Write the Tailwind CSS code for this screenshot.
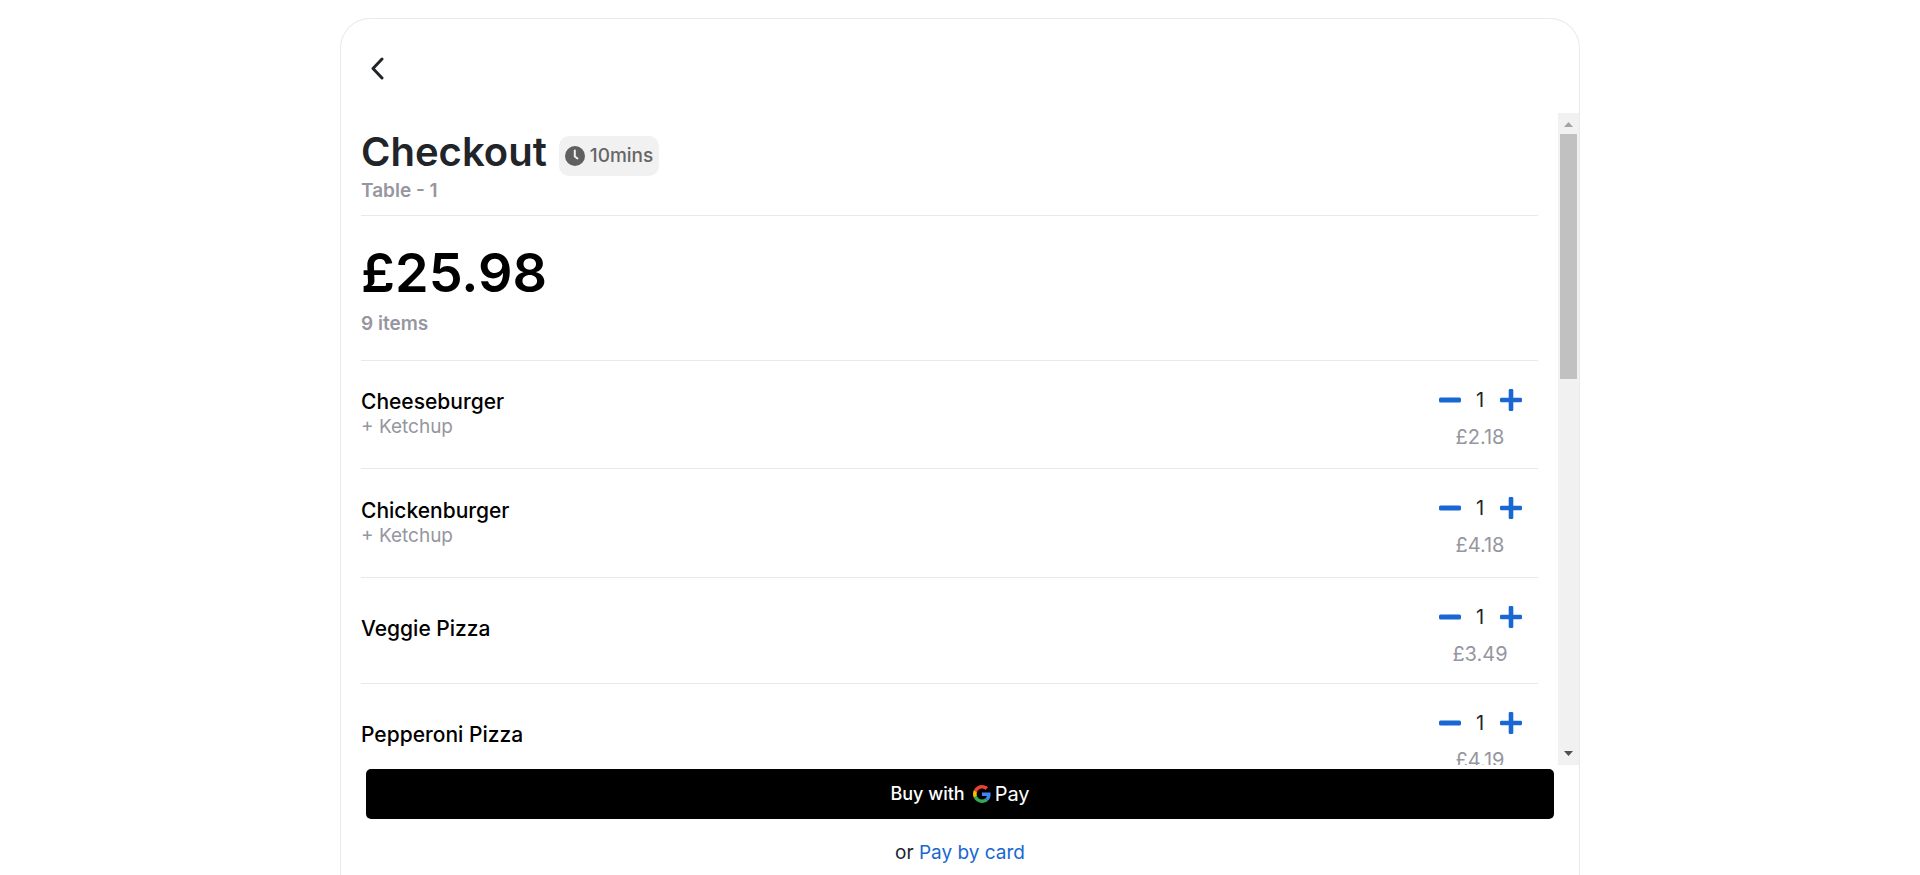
<!DOCTYPE html>
<html lang="en">
<head>
<meta charset="utf-8">
<meta name="viewport" content="width=device-width, initial-scale=1">
<title>Checkout</title>
<script src="https://cdn.jsdelivr.net/npm/@tailwindcss/browser@4"></script>
</head>
<body class="bg-white font-['Inter',sans-serif] text-[#212529]">
<svg class="hidden">
  <symbol id="minus" viewBox="0 0 22 22"><rect y="8.5" width="22" height="5" rx="1.5" fill="currentColor"/></symbol>
  <symbol id="plus" viewBox="0 0 22 22"><path fill="currentColor" d="M10 0h2a1.3 1.3 0 0 1 1.3 1.3v7.4h7.4A1.3 1.3 0 0 1 22 10v2a1.3 1.3 0 0 1-1.3 1.3h-7.4v7.4A1.3 1.3 0 0 1 12 22h-2a1.3 1.3 0 0 1-1.3-1.3v-7.4H1.3A1.3 1.3 0 0 1 0 12v-2a1.3 1.3 0 0 1 1.3-1.3h7.4V1.3A1.3 1.3 0 0 1 10 0z"/></symbol>
</svg>
<div class="flex h-screen flex-col overflow-hidden px-4 pt-[18px]">
  <main class="mx-auto flex min-h-0 w-full max-w-[1240px] grow flex-col rounded-t-[30px] border border-b-0 border-[#e9e9ea]">
    <header class="flex h-[94px] shrink-0 items-center px-5 pt-1">
      <button type="button" aria-label="Back" class="flex size-8 items-center justify-center">
        <svg class="h-6 w-4" viewBox="0 0 16 24" fill="none" stroke="currentColor" stroke-width="3" stroke-linecap="round" stroke-linejoin="round"><path d="M13 3 4 12.500 13 22"/></svg>
      </button>
    </header>
    <div class="flex min-h-0 grow">
      <div class="min-w-0 grow overflow-y-auto px-5 [scrollbar-width:none]">
        <section class="border-b border-[#e9e9ea] pt-[15px] pb-3">
          <div class="flex h-12 items-center gap-3">
            <h1 class="text-[40px] leading-12 font-semibold">Checkout</h1>
            <span class="mt-2 flex h-10 items-center gap-[5px] rounded-[10px] bg-[#f1f1f1] px-1.5 text-[19px] font-medium text-[#666]">
              <svg class="size-5" viewBox="0 0 20 20"><circle cx="10" cy="10" r="10" fill="#606060"/><path d="M9.800 4.500v6l2.700 2" fill="none" stroke="#f1f1f1" stroke-width="2" stroke-linecap="round" stroke-linejoin="round"/></svg>
              10mins
            </span>
          </div>
          <p class="mt-[3px] text-[19px] leading-6 font-semibold text-[#9696a0]">Table - 1</p>
        </section>
        <section class="border-b border-[#e9e9ea] pt-[21px] pb-6">
          <p class="text-[54px] leading-[72px] font-semibold text-black">£25.98</p>
          <p class="mt-[3px] text-[19px] leading-6 font-semibold text-[#9696a0]">9 items</p>
        </section>
        <ul>
          <li class="flex items-center justify-between border-b border-[#e9e9ea]">
            <div class="pt-7 pb-[29px]">
              <h2 class="text-[21px] leading-[26px] font-medium text-black">Cheeseburger</h2>
              <p class="text-[19px] leading-6 text-[#9696a0]">+ Ketchup</p>
            </div>
            <div class="flex w-[116px] flex-col items-center self-start pt-7 pb-4">
              <div class="flex items-center gap-3.5">
                <button type="button" aria-label="Remove one Cheeseburger" class="text-[#1967d2]"><svg class="size-[22px]"><use href="#minus"/></svg></button>
                <span class="w-[11px] text-center text-xl leading-[22px]">1</span>
                <button type="button" aria-label="Add one Cheeseburger" class="text-[#1967d2]"><svg class="size-[22px]"><use href="#plus"/></svg></button>
              </div>
              <p class="mt-3.5 text-xl leading-6 text-[#9696a0]">£2.18</p>
            </div>
          </li>
          <li class="flex items-center justify-between border-b border-[#e9e9ea]">
            <div class="pt-[29px] pb-[29px]">
              <h2 class="text-[21px] leading-[26px] font-medium text-black">Chickenburger</h2>
              <p class="text-[19px] leading-6 text-[#9696a0]">+ Ketchup</p>
            </div>
            <div class="flex w-[116px] flex-col items-center self-start pt-7 pb-4">
              <div class="flex items-center gap-3.5">
                <button type="button" aria-label="Remove one Chickenburger" class="text-[#1967d2]"><svg class="size-[22px]"><use href="#minus"/></svg></button>
                <span class="w-[11px] text-center text-xl leading-[22px]">1</span>
                <button type="button" aria-label="Add one Chickenburger" class="text-[#1967d2]"><svg class="size-[22px]"><use href="#plus"/></svg></button>
              </div>
              <p class="mt-3.5 text-xl leading-6 text-[#9696a0]">£4.18</p>
            </div>
          </li>
          <li class="flex items-center justify-between border-b border-[#e9e9ea]">
            <h2 class="pb-1 text-[21px] leading-[26px] font-medium text-black">Veggie Pizza</h2>
            <div class="flex w-[116px] flex-col items-center self-start pt-7 pb-[17px]">
              <div class="flex items-center gap-3.5">
                <button type="button" aria-label="Remove one Veggie Pizza" class="text-[#1967d2]"><svg class="size-[22px]"><use href="#minus"/></svg></button>
                <span class="w-[11px] text-center text-xl leading-[22px]">1</span>
                <button type="button" aria-label="Add one Veggie Pizza" class="text-[#1967d2]"><svg class="size-[22px]"><use href="#plus"/></svg></button>
              </div>
              <p class="mt-3.5 text-xl leading-6 text-[#9696a0]">£3.49</p>
            </div>
          </li>
          <li class="flex items-center justify-between border-b border-[#e9e9ea]">
            <h2 class="pb-1 text-[21px] leading-[26px] font-medium text-black">Pepperoni Pizza</h2>
            <div class="flex w-[116px] flex-col items-center self-start pt-7 pb-[17px]">
              <div class="flex items-center gap-3.5">
                <button type="button" aria-label="Remove one Pepperoni Pizza" class="text-[#1967d2]"><svg class="size-[22px]"><use href="#minus"/></svg></button>
                <span class="w-[11px] text-center text-xl leading-[22px]">1</span>
                <button type="button" aria-label="Add one Pepperoni Pizza" class="text-[#1967d2]"><svg class="size-[22px]"><use href="#plus"/></svg></button>
              </div>
              <p class="mt-3.5 text-xl leading-6 text-[#9696a0]">£4.19</p>
            </div>
          </li>
        </ul>
      </div>
      <div aria-hidden="true" class="flex w-[21px] shrink-0 flex-col items-center bg-[#f1f1f1]">
        <svg class="h-[21px] w-[21px] shrink-0" viewBox="0 0 21 21"><path d="M6 14 10.500 9 15 14z" fill="#a3a3a3"/></svg>
        <div class="h-[245px] w-[17px] bg-[#c1c1c1]"></div>
        <svg class="mt-auto h-[21px] w-[21px] shrink-0" viewBox="0 0 21 21"><path d="M6 7 10.500 12 15 7z" fill="#505050"/></svg>
      </div>
    </div>
    <footer class="flex h-[110px] shrink-0 flex-col px-[25px] pt-1">
      <button type="button" class="flex h-[50px] items-center justify-center rounded-[5px] bg-black text-white">
        <span class="text-lg font-medium">Buy with</span>
        <svg class="ml-2 size-[18px]" viewBox="0 0 48 48"><path fill="#EA4335" d="M24 9.500c3.540 0 6.710 1.220 9.210 3.600l6.850-6.850C35.900 2.380 30.470 0 24 0 14.620 0 6.510 5.380 2.560 13.220l7.980 6.190C12.430 13.720 17.740 9.500 24 9.500z"/><path fill="#4285F4" d="M46.980 24.550c0-1.570-.15-3.090-.38-4.550H24v9.020h12.940c-.58 2.960-2.260 5.480-4.780 7.180l7.730 6c4.510-4.180 7.090-10.360 7.090-17.650z"/><path fill="#FBBC05" d="M10.530 28.590c-.48-1.450-.76-2.990-.76-4.590s.27-3.140.76-4.590l-7.980-6.190C.92 16.460 0 20.120 0 24c0 3.880.92 7.540 2.560 10.780l7.970-6.190z"/><path fill="#34A853" d="M24 48c6.480 0 11.930-2.130 15.890-5.810l-7.730-6c-2.150 1.450-4.920 2.300-8.160 2.300-6.260 0-11.570-4.220-13.470-9.910l-7.980 6.190C6.510 42.620 14.620 48 24 48z"/></svg>
        <span class="ml-1 text-xl">Pay</span>
      </button>
      <p class="mt-5 text-center text-[19px] leading-7">or <a href="#card" class="text-[#1967d2]">Pay by card</a></p>
    </footer>
  </main>
</div>
</body>
</html>
